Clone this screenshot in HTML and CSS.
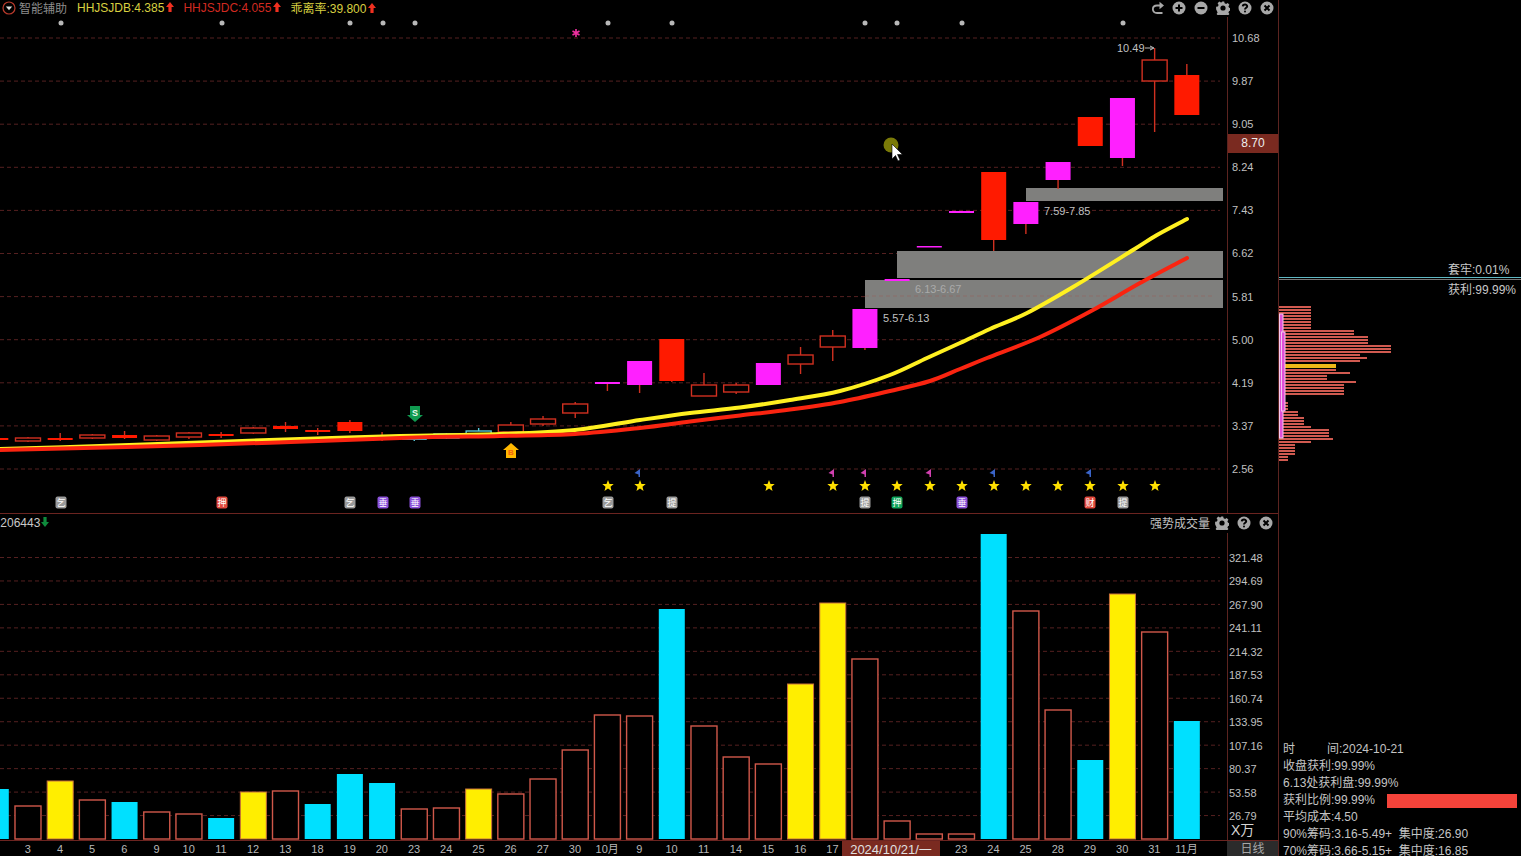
FILE: index.html
```html
<!DOCTYPE html>
<html lang="zh-CN">

<head>
    <meta charset="UTF-8">
    <meta name="viewport" content="width=device-width, initial-scale=1.0">
    <title>智能辅助</title>
    <link rel="stylesheet" href="styles.css">
</head>

<body>
    <svg class="defs" width="0" height="0">
        <symbol id="up" viewBox="0 0 8 10">
            <path d="M4 0 8 5H5.600V10H2.400V5H0Z" />
        </symbol>
        <symbol id="plus" viewBox="0 0 14 14">
            <circle cx="7" cy="7" r="6.500" />
            <path class="cut" d="M3.500 7h7M7 3.500v7" />
        </symbol>
        <symbol id="minus" viewBox="0 0 14 14">
            <circle cx="7" cy="7" r="6.500" />
            <path class="cut" d="M3.500 7h7" />
        </symbol>
        <symbol id="close" viewBox="0 0 14 14">
            <circle cx="7" cy="7" r="6.500" />
            <path class="cut" d="M4.500 4.500l5 5M9.500 4.500l-5 5" />
        </symbol>
        <symbol id="help" viewBox="0 0 14 14">
            <circle cx="7" cy="7" r="6.500" />
            <path class="cut" d="M4.800 5.400C4.900 3 9.200 3 9.200 5.300 9.200 6.800 7 6.700 7 8.500" />
            <circle class="dot" cx="7" cy="10.500" r="1" />
        </symbol>
        <symbol id="gear" viewBox="0 0 14 14">
            <path d="M5.800 .5h2.400l.4 1.800 1.500.7 1.600-1 1.700 1.700-1 1.600.7 1.500 1.800.4v2.400l-1.800.4-.7 1.500 1 1.600-1.700 1.700-1.600-1-1.500.7-.4 1.800H5.800l-.4-1.800-1.500-.7-1.600 1-1.700-1.700 1-1.600-.7-1.500L.1 8.200V5.800l1.800-.4.7-1.500-1-1.600 1.700-1.700 1.600 1 1.500-.7z" />
            <circle class="dot" cx="7" cy="7" r="2.600" />
        </symbol>
    </svg>

    <div class="screen">
        <main class="charts">
            <section class="pane pane-kline">
                <header class="pane-head">
                    <div class="legend">
                        <svg class="menu-icon" viewBox="0 0 14 14">
                            <circle cx="7" cy="7" r="6" />
                            <path d="M3.800 5.500h6.400L7 9.200z" />
                        </svg>
                        <span class="legend-name">智能辅助</span>
                        <span class="val-yellow">HHJSJDB:4.385<svg class="arrow-up"><use href="#up" /></svg></span>
                        <span class="val-red">HHJSJDC:4.055<svg class="arrow-up"><use href="#up" /></svg></span>
                        <span class="val-yellow">乖离率:39.800<svg class="arrow-up"><use href="#up" /></svg></span>
                    </div>
                    <div class="tools">
                        <svg class="tool" viewBox="0 0 14 14"><path class="back" d="M12.500 12H7C1.500 12 1.500 4.500 7 4.500H11" /><path d="M9.500 .8 14 4.500 9.500 8.200z" /></svg>
                        <svg class="tool"><use href="#plus" /></svg>
                        <svg class="tool"><use href="#minus" /></svg>
                        <svg class="tool"><use href="#gear" /></svg>
                        <svg class="tool"><use href="#help" /></svg>
                        <svg class="tool"><use href="#close" /></svg>
                    </div>
                </header>
                <div class="pane-body">
                    <svg id="kline" class="plot" viewBox="0 17 1227 496"></svg>
                    <div class="axis axis-price">
                        <span>10.68</span>
                        <span>9.87</span>
                        <span>9.05</span>
                        <span>8.24</span>
                        <span>7.43</span>
                        <span>6.62</span>
                        <span>5.81</span>
                        <span>5.00</span>
                        <span>4.19</span>
                        <span>3.37</span>
                        <span>2.56</span>
                        <b class="price-tag">8.70</b>
                    </div>
                </div>
            </section>

            <section class="pane pane-volume">
                <header class="pane-head pane-head-vol">
                    <div class="legend legend-vol">
                        <span class="val-white">:206443<svg class="arrow-down"><use href="#up" /></svg></span>
                    </div>
                    <div class="tools tools-vol">
                        <span class="vol-name">强势成交量</span>
                        <svg class="tool"><use href="#gear" /></svg>
                        <svg class="tool"><use href="#help" /></svg>
                        <svg class="tool"><use href="#close" /></svg>
                    </div>
                </header>
                <div class="pane-body">
                    <svg id="volume" class="plot" viewBox="0 533 1227 307"></svg>
                    <div class="axis axis-vol">
                        <span>321.48</span>
                        <span>294.69</span>
                        <span>267.90</span>
                        <span>241.11</span>
                        <span>214.32</span>
                        <span>187.53</span>
                        <span>160.74</span>
                        <span>133.95</span>
                        <span>107.16</span>
                        <span>80.37</span>
                        <span>53.58</span>
                        <span>26.79</span>
                        <em class="unit">X万</em>
                    </div>
                </div>
                <footer class="date-row">
                    <div class="dates">
                        <span>月</span><span>3</span><span>4</span><span>5</span><span>6</span><span>9</span><span>10</span><span>11</span><span>12</span><span>13</span><span>18</span><span>19</span><span>20</span><span>23</span><span>24</span><span>25</span><span>26</span><span>27</span><span>30</span><span>10月</span><span>9</span><span>10</span><span>11</span><span>14</span><span>15</span><span>16</span><span>17</span><span></span><span></span><span></span><span>23</span><span>24</span><span>25</span><span>28</span><span>29</span><span>30</span><span>31</span><span>11月</span>
                        <b class="date-now">2024/10/21/一</b>
                    </div>
                    <div class="period">日线</div>
                </footer>
            </section>
        </main>

        <aside class="side">
            <div class="trap">套牢:0.01%</div>
            <div class="cost-line"></div>
            <div class="gain">获利:99.99%</div>
            <svg id="chips" class="chips" viewBox="1278 300 242 170"></svg>
            <div class="info">
                <p>时<i class="gap"></i>间:2024-10-21</p>
                <p>收盘获利:99.99%</p>
                <p>6.13处获利盘:99.99%</p>
                <p class="ratio">获利比例:99.99%<i class="ratio-bar"></i></p>
                <p>平均成本:4.50</p>
                <p>90%筹码:3.16-5.49+&nbsp; 集中度:26.90</p>
                <p>70%筹码:3.66-5.15+&nbsp; 集中度:16.85</p>
            </div>
        </aside>
    </div>

    <script src="chart.js"></script>
</body>

</html>
```

FILE: styles.css
```css
* {
    box-sizing: border-box;
}

html,
body {
    margin: 0;
    height: 100%;
    background-color: #000;
    overflow: hidden;
}

body {
    font-family: "Liberation Sans", "Noto Sans CJK SC", sans-serif;
    font-size: 12px;
    color: #c4c4c4;
}

.defs {
    position: absolute;
}

.cut {
    fill: none;
    stroke: #000;
    stroke-width: 2;
}

.dot {
    fill: #000;
}

.screen {
    display: grid;
    grid-template-columns: 1279px 1fr;
    height: 856px;
}

.charts {
    display: flex;
    flex-direction: column;
    border-right: 1px solid #5c2420;
    min-width: 0;
}

.pane-kline {
    height: 514px;
    border-bottom: 1px solid #6b2420;
    display: flex;
    flex-direction: column;
}

.pane-volume {
    height: 342px;
    display: flex;
    flex-direction: column;
}

.pane-head {
    height: 17px;
    padding-bottom: 2px;
    display: flex;
    justify-content: space-between;
    align-items: center;
    flex: none;
}

.pane-head-vol {
    height: 19px;
}

.legend {
    display: flex;
    align-items: center;
    gap: 9px;
    padding-left: 2px;
    white-space: nowrap;
}

.legend-vol {
    padding-left: 0;
    margin-left: -3px;
}

.menu-icon {
    width: 14px;
    height: 14px;
    margin-right: -6px;
}

.menu-icon circle {
    fill: none;
    stroke: #b93a2c;
    stroke-width: 1.2;
}

.menu-icon path {
    fill: #ddd;
}

.legend-name {
    color: #8c8c8c;
    margin-right: 1px;
}

.val-yellow {
    color: #d8d040;
}

.val-red {
    color: #d02a20;
}

.val-white {
    color: #c8c8c8;
}

.arrow-up {
    width: 8px;
    height: 10px;
    margin-left: 2px;
    fill: #f03020;
}

.arrow-down {
    width: 8px;
    height: 10px;
    margin-left: 1px;
    fill: #0f8a3c;
    transform: rotate(180deg);
}

.tools {
    display: flex;
    align-items: center;
    gap: 8px;
    padding-right: 4px;
}

.tools-vol {
    padding-right: 5px;
}

.tool {
    width: 14px;
    height: 14px;
    fill: #a8a8a8;
}

.back {
    fill: none;
    stroke: #a8a8a8;
    stroke-width: 1.8;
}

.vol-name {
    color: #c0c0c0;
    margin-right: -3px;
}

.pane-body {
    flex: 1;
    display: flex;
    min-height: 0;
}

.plot {
    width: 1227px;
    height: 100%;
    flex: none;
    display: block;
    overflow: hidden;
}

.axis {
    position: relative;
    flex: 1;
    display: flex;
    flex-direction: column;
    border-left: 1px solid #5c2420;
    font-size: 11px;
    color: #c0c0c0;
    white-space: nowrap;
}

.axis-price {
    padding-left: 4px;
}

.axis-price span {
    height: 43.1px;
    line-height: 43.1px;
    flex: none;
}

.axis-vol {
    padding: 14px 0 0 1px;
}

.axis-vol span {
    height: 23.46px;
    line-height: 23.46px;
    flex: none;
}

.unit {
    font-style: normal;
    font-size: 14px;
    line-height: 14px;
    margin-top: -5px;
    padding-left: 2px;
    color: #d4d4d4;
}

.price-tag {
    position: absolute;
    top: 117px;
    left: 0;
    right: 0;
    height: 19px;
    line-height: 19px;
    text-align: center;
    font-weight: normal;
    font-size: 12px;
    color: #eee;
    background-color: #7a2a20;
}

.date-row {
    height: 16px;
    flex: none;
    display: flex;
    border-top: 1px solid #6b2420;
    font-size: 11px;
    line-height: 17px;
    overflow: hidden;
}

.dates {
    position: relative;
    width: 1227px;
    flex: none;
    display: flex;
    overflow: hidden;
}

.dates span {
    width: 32.19px;
    flex: none;
    text-align: center;
    color: #b8b8b8;
    position: relative;
    left: -20.5px;
}

.date-now {
    position: absolute;
    top: 0;
    left: 842px;
    width: 98px;
    height: 15px;
    text-align: center;
    font-weight: normal;
    font-size: 13px;
    color: #e0e0e0;
    background-color: #7a2a20;
}

.period {
    flex: 1;
    text-align: center;
    font-size: 12px;
    color: #a8a8a8;
    background-color: #2b2b2b;
}

.side {
    display: flex;
    flex-direction: column;
    min-width: 0;
    overflow: hidden;
    height: 856px;
}

.trap {
    margin-top: 263px;
    padding-left: 169px;
    line-height: 14px;
    color: #c8c8c8;
}

.cost-line {
    height: 3px;
    margin-left: -1px;
    border-top: 1px solid #5fb8c4;
    border-bottom: 1px solid #777;
    flex: none;
}

.gain {
    padding-left: 169px;
    margin-top: 3px;
    line-height: 15px;
    color: #c8c8c8;
}

.chips {
    margin-top: 2px;
    width: 242px;
    height: 170px;
    flex: none;
}

.info {
    margin-top: 271px;
    padding-left: 4px;
    line-height: 17px;
    color: #c4c4c4;
    white-space: nowrap;
}

.info p {
    margin: 0;
}

.gap {
    display: inline-block;
    width: 32px;
}

.ratio {
    display: flex;
    align-items: center;
}

.ratio-bar {
    width: 130px;
    height: 14px;
    margin-left: 12px;
    background-color: #f4433a;
}

/* chart marks */
.grid {
    stroke: #552020;
    stroke-width: 1;
    stroke-dasharray: 4 3;
}

.grid-zone {
    stroke: #8c6f6a;
}

.wick {
    stroke: #d03020;
    stroke-width: 1.4;
}

.wick-cyan {
    stroke: #58c8d8;
}

.body-up {
    fill: #ff1a00;
}

.body-hollow {
    fill: #000;
    stroke: #d03020;
    stroke-width: 1.4;
}

.body-cyan {
    fill: #000;
    stroke: #58c8d8;
    stroke-width: 1.4;
}

.body-cyan-fill {
    fill: #20c8e8;
}

.body-pink {
    fill: #ff20ff;
}

.zone {
    fill: #7f7f7d;
}

.ma-yellow,
.ma-red {
    fill: none;
    stroke-width: 4;
    stroke-linejoin: round;
    stroke-linecap: round;
}

.ma-yellow {
    stroke: #fff020;
}

.ma-red {
    stroke: #fa2410;
}

.note {
    font-size: 11px;
    fill: #c0c0c0;
}

.note-dim {
    fill: #aaaaaa;
}

.mark-dot {
    fill: #b8b8b8;
}

.star {
    fill: #ffe000;
}

.flag-blue {
    fill: #3a64c8;
}

.flag-pink {
    fill: #d040b0;
}

.badge-text {
    font-size: 9px;
    text-anchor: middle;
    fill: #fff;
}

.badge-grey {
    fill: #9a9a9a;
}

.badge-red {
    fill: #e0483c;
}

.badge-purple {
    fill: #8a50d8;
}

.badge-green {
    fill: #0ea35a;
}

.vol-up {
    fill: #000;
    stroke: #d0584a;
    stroke-width: 1.4;
}

.vol-cyan {
    fill: #00e0ff;
}

.vol-yellow {
    fill: #ffee00;
    stroke: #c8703a;
    stroke-width: 1;
}

.chip {
    stroke: #d05a50;
    stroke-width: 2;
}

.chip-now {
    stroke: #f0b818;
    stroke-width: 4;
}

.chip-bar {
    fill: #e050d8;
    stroke: #f4c8f0;
    stroke-width: 1;
}
```

FILE: chart.js
```js
// candle centres and bars sit on one 32.19px step, values are screen pixels
function slotX(i) {
    return -4.2 + 32.19 * i
}

// kind, wick top, wick bottom, body top, body bottom
const candles = [
    ["up", 437, 441, 438, 440], ["hollow", 437, 442, 438, 441], ["up", 433, 441, 438, 440], ["hollow", 434, 439, 435, 438],
    ["up", 431, 439, 435, 438], ["hollow", 435, 441, 436, 440], ["hollow", 432, 439, 433, 437], ["up", 432, 438, 434, 436],
    ["hollow", 427, 434, 428, 433], ["up", 422, 432, 426, 429], ["up", 428, 435, 430, 432], ["up", 420, 433, 422, 431],
    ["up", 432, 441, 435, 439], ["cyanfill", 436, 441, 438, 440], ["cyan", 433, 439, 434, 438], ["cyan", 428, 437, 431, 434],
    ["hollow", 422, 433, 425, 432], ["hollow", 416, 426, 419, 424], ["hollow", 402, 418, 404, 413], ["pink", 382, 391, 382, 384],
    ["pink", 361, 393, 361, 385], ["up", 339, 382, 339, 381], ["hollow", 373, 396, 385, 396], ["hollow", 383, 394, 385, 392],
    ["pink", 363, 385, 363, 385], ["hollow", 347, 374, 355, 364], ["hollow", 330, 361, 336, 347], ["pink", 309, 350, 309, 348],
    ["pink", 279, 281, 279, 281], ["pink", 246, 247, 246, 247.5], ["pink", 211, 213, 211, 213], ["up", 172, 251, 172, 240],
    ["pink", 202, 234, 202, 224], ["pink", 162, 189, 162, 180], ["up", 117, 146, 117, 146], ["pink", 98, 166, 98, 158],
    ["hollow", 48, 132, 60, 81], ["up", 64, 115, 75, 115]
]

const bodyClass = { up: "body-up", hollow: "body-hollow", cyan: "body-cyan", cyanfill: "body-cyan-fill", pink: "body-pink" }

const yellowLine = [[0, 449], [100, 446], [200, 442.5], [300, 439], [400, 436], [500, 434], [575, 430], [640, 420], [690, 413], [740, 407.5], [790, 400], [840, 391], [890, 375], [927, 358], [960, 343], [990, 329], [1027, 313], [1073, 287], [1133, 250], [1157, 235], [1187, 219]]
const redLine = [[0, 450], [200, 445], [400, 438], [500, 436], [575, 434], [640, 428], [690, 421.5], [740, 415.5], [790, 409.5], [840, 402], [890, 391], [930, 381], [960, 369], [987, 358], [1040, 337], [1093, 310], [1140, 283], [1187, 258]]

const topDots = [61, 222, 350, 383, 415, 608, 672, 865, 897, 962, 1123]
const stars = [608, 640, 769, 833, 865, 897, 930, 962, 994, 1026, 1058, 1090, 1123, 1155]
const flags = [[637, "blue"], [831, "pink"], [863, "pink"], [928, "pink"], [992, "blue"], [1088, "blue"]]
const badges = [
    [61, "grey", "乞"], [222, "red", "押"], [350, "grey", "乞"], [383, "purple", "垂"], [415, "purple", "垂"], [608, "grey", "乞"],
    [672, "grey", "提"], [865, "grey", "提"], [897, "green", "押"], [962, "purple", "垂"], [1090, "red", "财"], [1123, "grey", "提"]
]

// kind, top of bar; bars stand on y=839
const bars = [
    ["c", 789], ["o", 806], ["y", 781], ["o", 800], ["c", 802], ["o", 812], ["o", 814], ["c", 818], ["y", 792], ["o", 791],
    ["c", 804], ["c", 774], ["c", 783], ["o", 809], ["o", 808], ["y", 789], ["o", 794], ["o", 779], ["o", 750], ["o", 715],
    ["o", 716], ["c", 609], ["o", 726], ["o", 757], ["o", 764], ["y", 684], ["y", 603], ["o", 659], ["o", 821], ["o", 834],
    ["o", 834], ["c", 534], ["o", 611], ["o", 710], ["c", 760], ["y", 594], ["o", 632], ["c", 721]
]

// from, to, length end
const chipRows = [
    [307, 328, 1310], [329, 336, 1353], [337, 344, 1367], [345, 352, 1390], [353, 357, 1359], [358, 359, 1366], [360, 363, 1359],
    [367, 370, 1335], [371, 373, 1349], [374, 380, 1326], [381, 384, 1355], [385, 394, 1343], [395, 396, 1315], [401, 411, 1287],
    [412, 417, 1297], [418, 424, 1303], [425, 429, 1310], [430, 438, 1328], [439, 440, 1332], [441, 444, 1310], [445, 454, 1294], [455, 460, 1287]
]

function starPoints(x, y) {
    let pts = []
    for (let k = 0; k < 10; k++) {
        const r = k % 2 ? 2.6 : 6
        const a = -Math.PI / 2 + k * Math.PI / 5
        pts.push((x + r * Math.cos(a)).toFixed(1) + "," + (y + r * Math.sin(a)).toFixed(1))
    }
    return pts.join(" ")
}

// catmull-rom through the points, so the averages don't show kinks
function smoothPath(pts) {
    let d = "M" + pts[0][0] + " " + pts[0][1]
    for (let i = 0; i < pts.length - 1; i++) {
        const p0 = pts[i - 1] || pts[i]
        const p1 = pts[i]
        const p2 = pts[i + 1]
        const p3 = pts[i + 2] || p2
        const c1x = (p1[0] + (p2[0] - p0[0]) / 6).toFixed(1)
        const c1y = (p1[1] + (p2[1] - p0[1]) / 6).toFixed(1)
        const c2x = (p2[0] - (p3[0] - p1[0]) / 6).toFixed(1)
        const c2y = (p2[1] - (p3[1] - p1[1]) / 6).toFixed(1)
        d += ` C${c1x} ${c1y} ${c2x} ${c2y} ${p2[0]} ${p2[1]}`
    }
    return d
}

function drawKline() {
    let out = ""
    for (let i = 0; i < 11; i++) {
        const y = 38 + i * 43.1
        out += `<line class="grid" x1="0" x2="1220" y1="${y}" y2="${y}"/>`
    }

    out += `<rect class="zone" x="897" y="251" width="326" height="27"/>`
    out += `<rect class="zone" x="865" y="280" width="358" height="28"/>`
    out += `<rect class="zone" x="1026" y="188" width="197" height="13"/>`
    out += `<line class="grid grid-zone" x1="865" x2="1215" y1="296" y2="296"/>`

    candles.forEach(function (c, i) {
        const x = slotX(i)
        const kind = c[0]
        const wick = (kind == "cyan" || kind == "cyanfill") ? "wick wick-cyan" : "wick"
        out += `<line class="${wick}" x1="${x}" x2="${x}" y1="${c[1]}" y2="${c[2]}"/>`
        out += `<rect class="${bodyClass[kind]}" x="${x - 12.5}" y="${c[3]}" width="25" height="${c[4] - c[3]}"/>`
    })

    out += `<path class="ma-yellow" d="${smoothPath(yellowLine)}"/>`
    out += `<path class="ma-red" d="${smoothPath(redLine)}"/>`

    out += `<text class="note" x="883" y="322">5.57-6.13</text>`
    out += `<text class="note note-dim" x="915" y="293">6.13-6.67</text>`
    out += `<text class="note" x="1044" y="215">7.59-7.85</text>`
    out += `<text class="note" x="1117" y="52">10.49</text>`
    out += `<path d="M1145 48h8M1150 46l4 2-4 2" fill="none" stroke="#c0c0c0"/>`

    topDots.forEach(function (x) {
        out += `<circle class="mark-dot" cx="${x}" cy="23" r="2.500"/>`
    })

    // pink asterisk up top
    out += `<path d="M576 29v8M572.500 31l7 4M579.500 31l-7 4" stroke="#f030a0" stroke-width="1.600"/>`

    stars.forEach(function (x) {
        out += `<polygon class="star" points="${starPoints(x, 486)}"/>`
    })
    flags.forEach(function (f) {
        out += `<path class="flag-${f[1]}" d="M${f[0] + 3} 469v8h-1.500v-2.500l-4-1.500z"/>`
    })
    badges.forEach(function (b) {
        out += `<rect class="badge-${b[1]}" x="${b[0] - 5.500}" y="496.500" width="11" height="12" rx="2"/>`
        out += `<text class="badge-text" x="${b[0]}" y="506">${b[2]}</text>`
    })

    // S and B signals
    out += `<path d="M410 406h10v9h3l-8 7-8-7h3z" fill="#109a50"/>`
    out += `<text x="415" y="416" font-size="9" font-weight="bold" text-anchor="middle" fill="#e8f8e8">S</text>`
    out += `<path d="M511 443l8 7h-3v8h-10v-8h-3z" fill="#ffb800"/>`
    out += `<text x="511" y="455" font-size="8" font-weight="bold" text-anchor="middle" fill="#f06010">B</text>`

    // mouse pointer
    out += `<circle cx="891" cy="145" r="7.500" fill="#7a7a08"/>`
    out += `<path d="M892 144v15l3.500-3.500 2.500 5.500 2-1-2.500-5.500h5z" fill="#fff" stroke="#000" stroke-width=".6"/>`

    document.getElementById("kline").innerHTML = out
}

function drawVolume() {
    let out = ""
    for (let i = 0; i < 12; i++) {
        const y = 557.5 + i * 23.46
        out += `<line class="grid" x1="0" x2="1220" y1="${y}" y2="${y}"/>`
    }

    bars.forEach(function (b, i) {
        const x = slotX(i) - 13
        const cls = b[0] == "c" ? "vol-cyan" : b[0] == "y" ? "vol-yellow" : "vol-up"
        out += `<rect class="${cls}" x="${x}" y="${b[1]}" width="26" height="${839 - b[1]}"/>`
    })
    document.getElementById("volume").innerHTML = out
}

function drawChips() {
    let out = ""
    for (let y = 307; y <= 460; y += 3) {
        const row = chipRows.find(function (r) {
            return y >= r[0] && y <= r[1]
        })
        if (row) {
            out += `<line class="chip" x1="1278" x2="${row[2]}" y1="${y}" y2="${y}"/>`
        }
    }
    out += `<line class="chip-now" x1="1284" x2="1335" y1="366" y2="366"/>`
    out += `<rect class="chip-bar" x="1278.500" y="314" width="3.500" height="124"/>`
    out += `<rect class="chip-bar" x="1280.500" y="332" width="3.500" height="79"/>`
    document.getElementById("chips").innerHTML = out
}

drawKline()
drawVolume()
drawChips()
```
